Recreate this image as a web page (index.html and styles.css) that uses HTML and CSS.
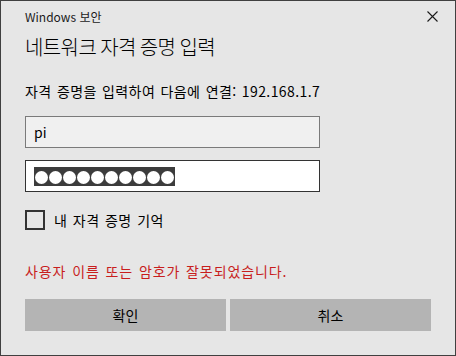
FILE: index.html
```html
<!DOCTYPE html>
<html lang="ko">
<head>
    <meta charset="UTF-8">
    <title>Windows 보안</title>
    <link rel="stylesheet" href="styles.css">
</head>
<body>
    <div class="window">
        <!-- Title bar -->
        <div class="titlebar">
            <span class="title">Windows 보안</span>
            <svg class="close" width="11" height="11" viewBox="0 0 11 11">
                <path d="M0.5 0.5 L10.5 10.5 M10.5 0.5 L0.5 10.5" stroke="#1a1a1a" stroke-width="1.1" fill="none"/>
            </svg>
        </div>

        <div class="heading">네트워크 자격 증명 입력</div>
        <div class="subtitle">자격 증명을 입력하여 다음에 연결: 192.168.1.7</div>

        <!-- Fields -->
        <div class="field field-user">pi</div>
        <div class="field field-pass">
            <span class="selection">
                <i></i><i></i><i></i><i></i><i></i><i></i><i></i><i></i><i></i><i></i>
            </span>
        </div>

        <div class="remember">
            <span class="checkbox"></span>
            <span>내 자격 증명 기억</span>
        </div>

        <div class="error">사용자 이름 또는 암호가 잘못되었습니다.</div>

        <!-- Buttons -->
        <div class="buttons">
            <button class="button">확인</button>
            <button class="button">취소</button>
        </div>
    </div>
</body>
</html>
```

FILE: styles.css
```css
/* General */
body {
    margin: 0;
    padding: 0;
    font-family: "Noto Sans CJK KR", "Noto Sans", sans-serif;
    color: #000;
}

.window {
    box-sizing: border-box;
    width: 456px;
    height: 356px;
    border: 1px solid #404040;
    background: #e6e6e6;
    padding: 0 24px;
}

/* Title bar */
.titlebar {
    height: 31px;
    display: flex;
    align-items: center;
    justify-content: space-between;
}
.title {
    font-size: 12px;
    color: #1a1a1a;
}
.close {
    margin-right: -7px;
}

.heading {
    font-size: 20px;
    font-weight: 300;
    line-height: 29px;
    letter-spacing: -0.6px;
    word-spacing: -1px;
}
.subtitle {
    margin-top: 20px;
    font-size: 14px;
    line-height: 20px;
    letter-spacing: 0.4px;
    word-spacing: 1px;
}

/* Inputs */
.field {
    box-sizing: border-box;
    width: 295px;
    height: 32px;
    padding-left: 8px;
    display: flex;
    align-items: center;
    font-size: 14px;
}
.field-user {
    margin-top: 15px;
    background: #f0f0f0;
    border: 1px solid #7a7a7a;
}
.field-pass {
    margin-top: 12px;
    background: #fff;
    border: 1px solid #333;
}
.selection {
    display: flex;
    gap: 1px;
    padding: 4px 1px 2px;
    background: #3c3c3c;
}
.selection i {
    width: 13px;
    height: 13px;
    border-radius: 50%;
    background: #fff;
}

/* Remember me */
.remember {
    margin-top: 17px;
    height: 21px;
    display: flex;
    align-items: center;
    gap: 9px;
    font-size: 14px;
    letter-spacing: 0.5px;
    word-spacing: 1px;
}
.checkbox {
    box-sizing: border-box;
    width: 20px;
    height: 20px;
    border: 2px solid #333;
}

.error {
    margin-top: 31px;
    font-size: 14px;
    line-height: 20px;
    letter-spacing: 0.9px;
    word-spacing: 1px;
    color: #c81e1e;
}

/* Buttons */
.buttons {
    margin-top: 18px;
    display: flex;
    gap: 4px;
}
.button {
    flex: 1;
    height: 32px;
    border: none;
    background: #b4b4b4;
    font-family: inherit;
    font-size: 14px;
    color: #000;
}
```
